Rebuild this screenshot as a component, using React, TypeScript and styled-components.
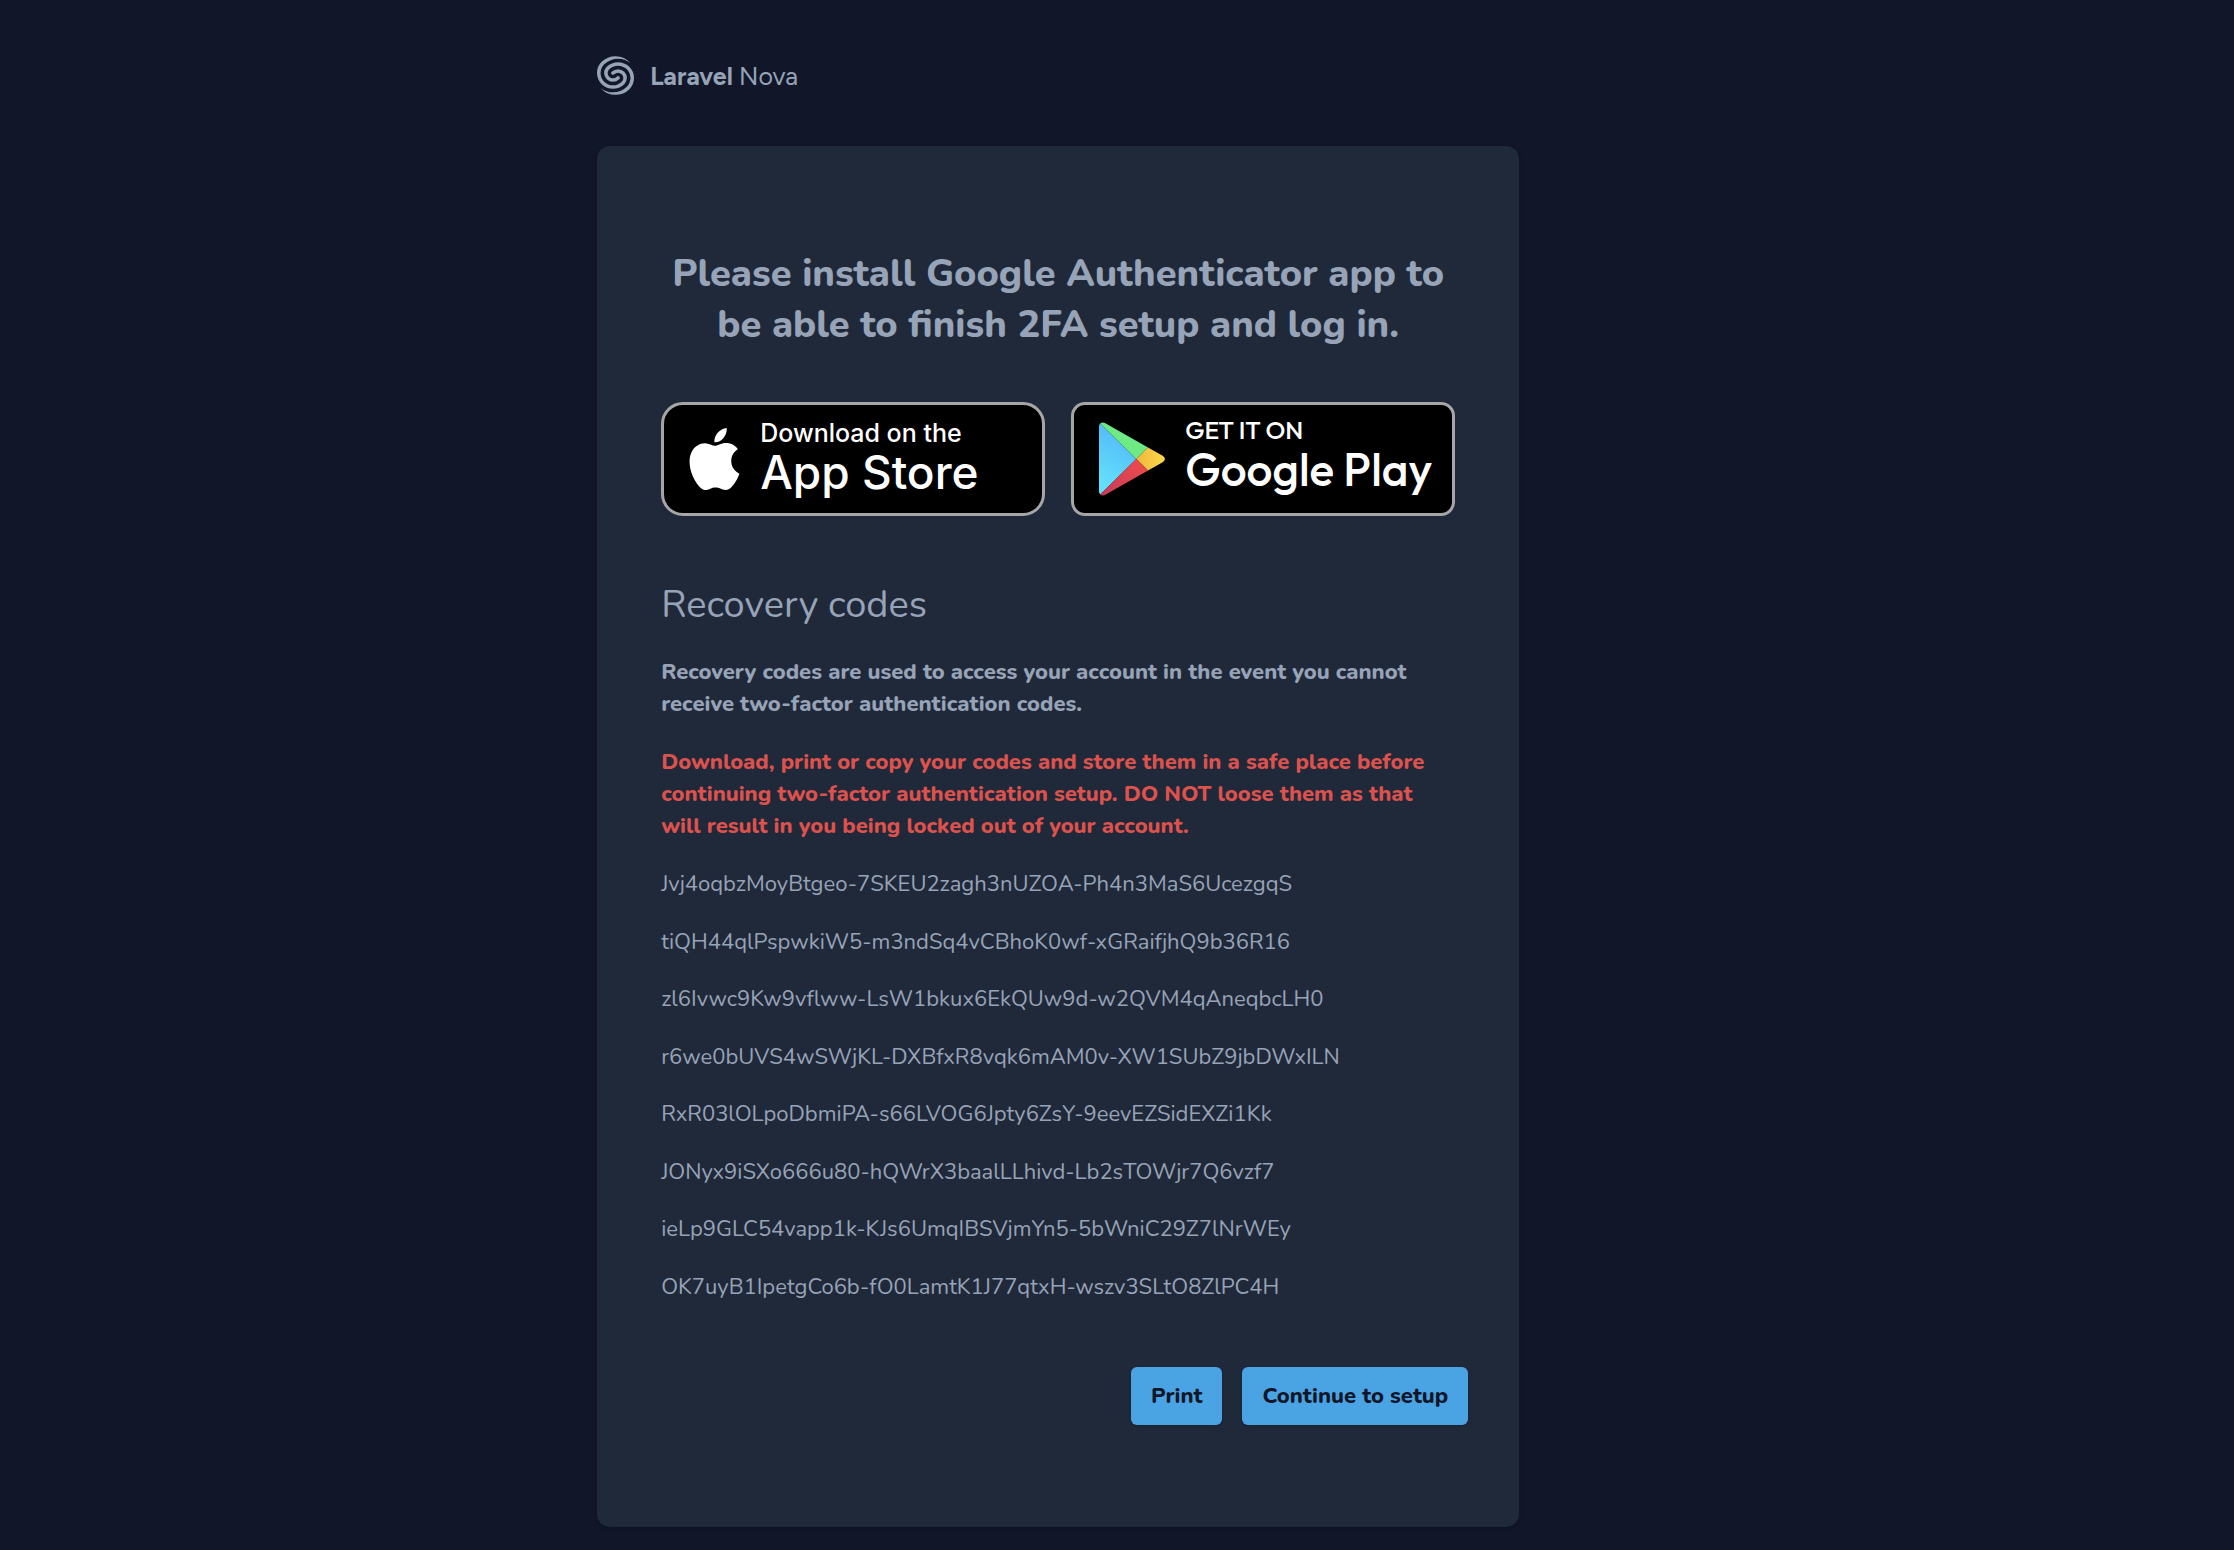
import React from "react";
import styled, { createGlobalStyle } from "styled-components";
import { SiApple } from "react-icons/si";

const GlobalStyle = createGlobalStyle`
  *, *::before, *::after { box-sizing: border-box; }
  body {
    margin: 0;
    background: #111729;
    color: #97a3b6;
    font-family: Nunito, "Open Sans", "Noto Sans", sans-serif;
    font-size: 22px;
    line-height: 32px;
    -webkit-font-smoothing: antialiased;
  }
  h1, h2, p, ul { margin: 0; padding: 0; font-weight: 400; }
`;

const Page = styled.div`
  display: grid;
  grid-template-columns: 1fr minmax(0, 922px) 1.197fr;
  min-height: 100vh;
  padding: 56px 0 23px;
`;

const Column = styled.div`
  grid-column: 2;
  display: flex;
  flex-direction: column;
  gap: 51px;
`;

const Brand = styled.a`
  display: flex;
  align-items: center;
  align-self: flex-start;
  gap: 16px;
  color: inherit;
  font-family: "Proxima Nova", Metropolis, Figtree, "Nunito Sans", Lato, sans-serif;
  font-size: 25px;
  line-height: 37px;
  text-decoration: none;
`;

const BrandName = styled.span`
  padding-top: 2px;
`;

const BrandMark = styled.svg`
  display: block;
  width: 37px;
  height: 39px;
  fill: currentColor;
`;

const Card = styled.main`
  display: flex;
  flex-direction: column;
  padding: 102px 0;
  border-radius: 13px;
  background: #20293a;
  box-shadow: 0 2px 5px rgba(0, 0, 0, 0.2);
`;

const Body = styled.div`
  display: flex;
  flex-direction: column;
  gap: 26px;
  padding: 0 64px;
`;

const Title = styled.h1`
  font-size: 38px;
  line-height: 51px;
  font-weight: 800;
  text-align: center;
`;

const Stores = styled.div`
  display: grid;
  grid-template-columns: 1fr 1fr;
  gap: 26px;
  padding: 26px 0 37px;
`;

const Badge = styled.a<{ $radius: number }>`
  display: flex;
  align-items: center;
  gap: 20px;
  height: 114px;
  padding-left: 25px;
  border: 3px solid #a6a6a6;
  border-radius: ${(p) => p.$radius}px;
  background: #000;
  color: #fff;
  text-decoration: none;
  white-space: nowrap;
`;

const AppleMark = styled.svg`
  width: 51px;
  height: 62px;
  flex: none;
  fill: currentColor;
`;

const PlayMark = styled.svg`
  width: 66px;
  height: 74px;
  flex: none;
`;

const BadgeText = styled.span<{ $family: string; $bottom: number }>`
  display: flex;
  flex-direction: column;
  padding-bottom: ${(p) => p.$bottom}px;
  font-family: ${(p) => p.$family}, sans-serif;
  font-weight: 500;
`;

const BadgeSmall = styled.span`
  font-size: 25px;
  line-height: 28px;
`;

const BadgeLarge = styled.span`
  font-size: 46px;
  line-height: 50px;
`;

const SectionTitle = styled.h2`
  font-size: 38px;
  line-height: 51px;
`;

const Note = styled.p<{ $danger?: boolean }>`
  font-weight: 800;
  color: ${(p) => (p.$danger ? "#dd524c" : "inherit")};
`;

const Codes = styled.ul`
  display: flex;
  flex-direction: column;
  justify-content: space-between;
  gap: 25px;
  min-height: 435px;
  list-style: none;
`;

const Actions = styled.div`
  display: flex;
  justify-content: flex-end;
  gap: 20px;
  padding: 64px 51px 0;
`;

const Button = styled.button`
  height: 58px;
  padding: 0 20px;
  border: 0;
  border-radius: 6px;
  background: #4aa3e3;
  color: #111729;
  font: inherit;
  font-weight: 800;
  box-shadow: 0 1px 3px rgba(0, 0, 0, 0.2);
  cursor: pointer;
`;

const recoveryCodes = [
  "Jvj4oqbzMoyBtgeo-7SKEU2zagh3nUZOA-Ph4n3MaS6UcezgqS",
  "tiQH44qlPspwkiW5-m3ndSq4vCBhoK0wf-xGRaifjhQ9b36R16",
  "zl6Ivwc9Kw9vflww-LsW1bkux6EkQUw9d-w2QVM4qAneqbcLH0",
  "r6we0bUVS4wSWjKL-DXBfxR8vqk6mAM0v-XW1SUbZ9jbDWxILN",
  "RxR03lOLpoDbmiPA-s66LVOG6Jpty6ZsY-9eevEZSidEXZi1Kk",
  "JONyx9iSXo666u80-hQWrX3baalLLhivd-Lb2sTOWjr7Q6vzf7",
  "ieLp9GLC54vapp1k-KJs6UmqIBSVjmYn5-5bWniC29Z7lNrWEy",
  "OK7uyB1IpetgCo6b-fO0LamtK1J77qtxH-wszv3SLtO8ZlPC4H",
];

function NovaMark() {
  return (
    <BrandMark viewBox="0 0 34.74 36.33" aria-hidden="true">
      <path d="M30.343 9.99a14.757 14.757 0 0 1 .046 20.972 18.383 18.383 0 0 1-13.019 5.365A18.382 18.382 0 0 1 3.272 29.79c7.209 5.955 17.945 5.581 24.713-1.118a11.477 11.477 0 0 0 0-16.345c-4.56-4.514-11.953-4.514-16.513 0a4.918 4.918 0 0 0 0 7.005 5.04 5.04 0 0 0 7.077 0 1.68 1.68 0 0 1 2.359 0 1.639 1.639 0 0 1 0 2.334 8.4 8.4 0 0 1-11.794 0 8.198 8.198 0 0 1 0-11.674c5.861-5.805 15.366-5.805 21.229 0ZM17.37 0a18.38 18.38 0 0 1 14.097 6.538C24.257.583 13.52.958 6.756 7.653v.002a11.477 11.477 0 0 0 0 16.346c4.558 4.515 11.95 4.515 16.51 0a4.918 4.918 0 0 0 0-7.005 5.04 5.04 0 0 0-7.077 0 1.68 1.68 0 0 1-2.358 0 1.639 1.639 0 0 1 0-2.334 8.4 8.4 0 0 1 11.794 0 8.198 8.198 0 0 1 0 11.674c-5.862 5.805-15.367 5.805-21.23 0a14.756 14.756 0 0 1-.02-20.994A18.383 18.383 0 0 1 17.37 0Z" />
    </BrandMark>
  );
}

function PlayIcon() {
  return (
    <PlayMark viewBox="0 0 66 74" aria-hidden="true">
      <defs>
        <linearGradient id="play-blue" x1="34" y1="6" x2="4" y2="60" gradientUnits="userSpaceOnUse">
          <stop offset="0" stopColor="#52b4fa" />
          <stop offset="1" stopColor="#62dffb" />
        </linearGradient>
        <linearGradient id="play-yellow" x1="64" y1="37" x2="37" y2="37" gradientUnits="userSpaceOnUse">
          <stop offset="0" stopColor="#f8d648" />
          <stop offset="1" stopColor="#f2b63e" />
        </linearGradient>
        <linearGradient id="play-red" x1="46" y1="42" x2="6" y2="74" gradientUnits="userSpaceOnUse">
          <stop offset="0" stopColor="#ee4b4c" />
          <stop offset="1" stopColor="#c63c58" />
        </linearGradient>
      </defs>
      <path d="M1.2 1.6C.4 2.4 0 3.6 0 5.2v63.6c0 1.6.4 2.8 1.2 3.6L37.3 37Z" fill="url(#play-blue)" />
      <path d="M1.2 1.6C2.5.3 4.5.2 6.8 1.5L49 25.5 37.3 37Z" fill="#6eea85" />
      <path d="M49 25.5 62.8 33.3c4 2.3 4 5.2 0 7.5L49 48.6 37.3 37Z" fill="url(#play-yellow)" />
      <path d="M1.2 72.4c1.3 1.3 3.3 1.4 5.6.1L49 48.6 37.3 37Z" fill="url(#play-red)" />
    </PlayMark>
  );
}

export default function App() {
  return (
    <>
      <GlobalStyle />
      <Page>
        <Column>
          <Brand href="#">
            <NovaMark />
            <BrandName>
              <b>Laravel</b> Nova
            </BrandName>
          </Brand>
          <Card>
            <Body>
              <Title>Please install Google Authenticator app to be able to finish 2FA setup and log in.</Title>
              <Stores>
                <Badge href="#" $radius={22}>
                  <AppleMark as={SiApple} viewBox="2 0 20 24" preserveAspectRatio="none" aria-hidden="true" />
                  <BadgeText $family="Inter" $bottom={2}>
                    <BadgeSmall>Download on the</BadgeSmall>
                    <BadgeLarge>App Store</BadgeLarge>
                  </BadgeText>
                </Badge>
                <Badge href="#" $radius={14}>
                  <PlayIcon />
                  <BadgeText $family='"Product Sans", "Google Sans", Outfit, Figtree, Lato' $bottom={8}>
                    <BadgeSmall>GET IT ON</BadgeSmall>
                    <BadgeLarge>Google Play</BadgeLarge>
                  </BadgeText>
                </Badge>
              </Stores>
              <SectionTitle>Recovery codes</SectionTitle>
              <Note>
                Recovery codes are used to access your account in the event you cannot receive two-factor
                authentication codes.
              </Note>
              <Note $danger>
                Download, print or copy your codes and store them in a safe place before continuing two-factor
                authentication setup. DO NOT loose them as that will result in you being locked out of your
                account.
              </Note>
              <Codes>
                {recoveryCodes.map((code) => (
                  <li key={code}>{code}</li>
                ))}
              </Codes>
            </Body>
            <Actions>
              <Button type="button">Print</Button>
              <Button type="button">Continue to setup</Button>
            </Actions>
          </Card>
        </Column>
      </Page>
    </>
  );
}
